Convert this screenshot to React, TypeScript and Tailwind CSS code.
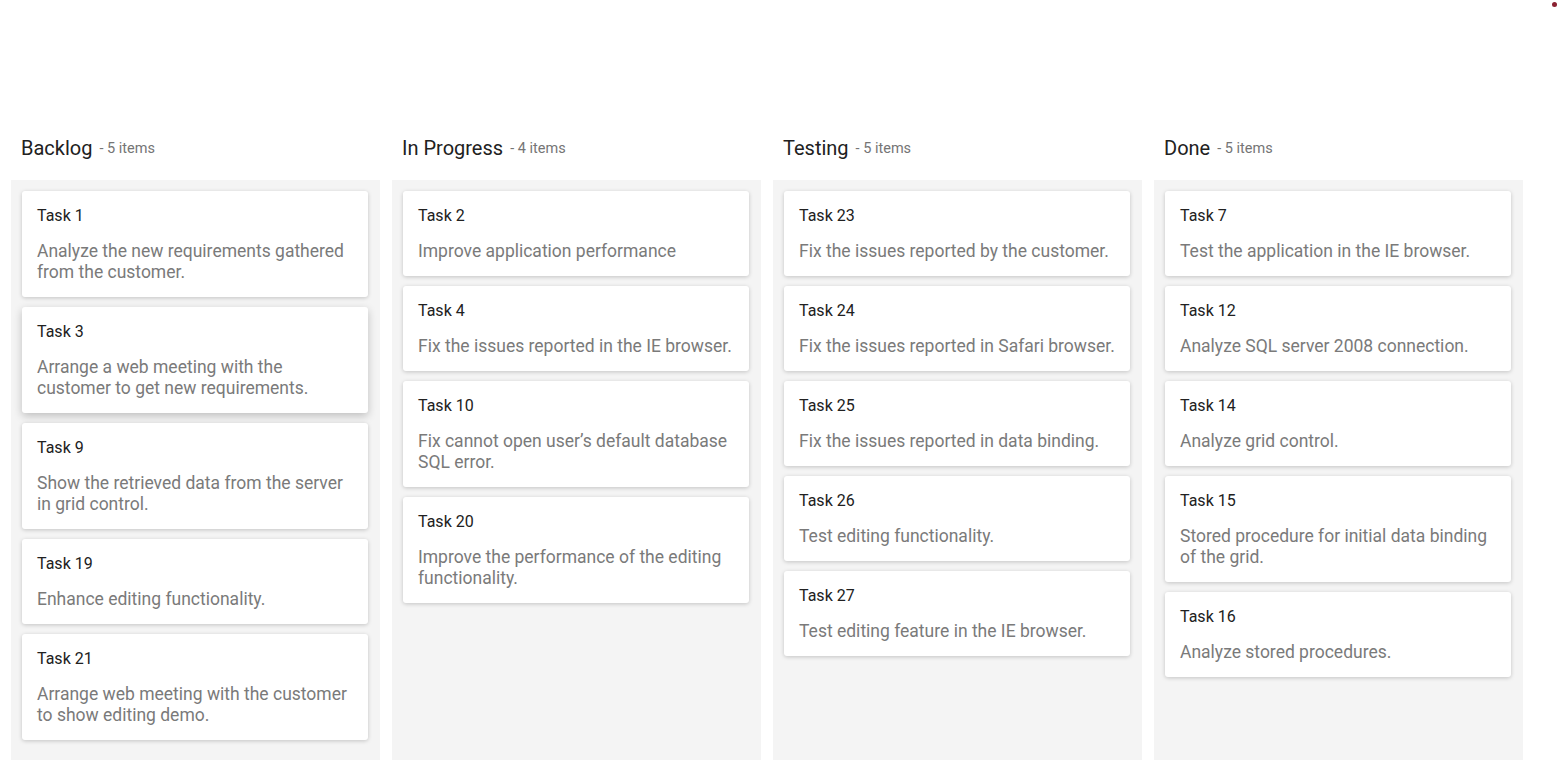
type Card = { id: number; summary: string };
type Column = { title: string; cards: Card[] };

const columns: Column[] = [
  {
    title: "Backlog",
    cards: [
      { id: 1, summary: "Analyze the new requirements gathered from the customer." },
      { id: 3, summary: "Arrange a web meeting with the customer to get new requirements." },
      { id: 9, summary: "Show the retrieved data from the server in grid control." },
      { id: 19, summary: "Enhance editing functionality." },
      { id: 21, summary: "Arrange web meeting with the customer to show editing demo." },
    ],
  },
  {
    title: "In Progress",
    cards: [
      { id: 2, summary: "Improve application performance" },
      { id: 4, summary: "Fix the issues reported in the IE browser." },
      { id: 10, summary: "Fix cannot open user\u2019s default database SQL error." },
      { id: 20, summary: "Improve the performance of the editing functionality." },
    ],
  },
  {
    title: "Testing",
    cards: [
      { id: 23, summary: "Fix the issues reported by the customer." },
      { id: 24, summary: "Fix the issues reported in Safari browser." },
      { id: 25, summary: "Fix the issues reported in data binding." },
      { id: 26, summary: "Test editing functionality." },
      { id: 27, summary: "Test editing feature in the IE browser." },
    ],
  },
  {
    title: "Done",
    cards: [
      { id: 7, summary: "Test the application in the IE browser." },
      { id: 12, summary: "Analyze SQL server 2008 connection." },
      { id: 14, summary: "Analyze grid control." },
      { id: 15, summary: "Stored procedure for initial data binding of the grid." },
      { id: 16, summary: "Analyze stored procedures." },
    ],
  },
];

function TaskCard({ card, hovered }: { card: Card; hovered?: boolean }) {
  return (
    <div
      className={
        hovered
          ? "bg-white rounded-[3px] px-[15px] pt-[15px] pb-[14px] shadow-[0_3px_8px_rgba(0,0,0,0.22)]"
          : "bg-white rounded-[3px] px-[15px] pt-[15px] pb-[14px] shadow-[0_1px_4px_rgba(0,0,0,0.2)]"
      }
    >
      <div className="text-[16px] leading-[20px] text-[#212121]">Task {card.id}</div>
      <div className="mt-[15px] text-[17.5px] leading-[21px] text-[#7a7a7a]">{card.summary}</div>
    </div>
  );
}

export default function App() {
  return (
    <div className="relative min-h-screen bg-white font-['Roboto','Liberation_Sans',sans-serif]">
      <span className="absolute top-[2px] right-[1px] w-[5px] h-[5px] rounded-full bg-[#8b2232]" />
      <div className="pt-[136px] px-[11px] grid grid-cols-[repeat(4,369px)] gap-x-[12px]">
        {columns.map((col) => (
          <div key={col.title} className="flex flex-col">
            <div className="h-[44px] px-[10px] flex items-start">
              <span className="text-[20px] leading-[24px] text-[#212121]">{col.title}</span>
              <span className="ml-[7px] mt-[1px] text-[14.5px] leading-[24px] text-[#757575]">
                - {col.cards.length} items
              </span>
            </div>
            <div className="h-[580px] bg-[#f4f4f4] pt-[11px] pl-[11px] pr-[12px] flex flex-col gap-[10px]">
              {col.cards.map((card) => (
                <TaskCard key={card.id} card={card} hovered={card.id === 3} />
              ))}
            </div>
          </div>
        ))}
      </div>
    </div>
  );
}
